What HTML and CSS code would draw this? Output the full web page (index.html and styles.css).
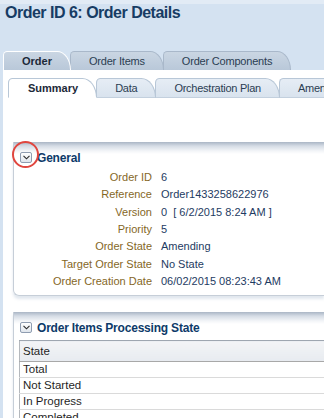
FILE: index.html
```html
<!DOCTYPE html>
<html lang="en">
<head>
    <meta charset="UTF-8">
    <meta name="viewport" content="width=device-width, initial-scale=1.0">
    <title>Order Details</title>
    <link rel="stylesheet" href="styles.css">
</head>
<body>
    <header class="page-title">
        <h1>Order ID 6: Order Details</h1>
    </header>

    <!-- Pestañas principales -->
    <nav class="tabs tabs-main">
        <a href="#" class="tab active">Order</a>
        <a href="#" class="tab">Order Items</a>
        <a href="#" class="tab">Order Components</a>
    </nav>

    <main class="content">
        <nav class="tabs tabs-sub">
            <a href="#" class="tab active">Summary</a>
            <a href="#" class="tab">Data</a>
            <a href="#" class="tab">Orchestration Plan</a>
            <a href="#" class="tab">Amendments</a>
        </nav>

        <!-- Panel General -->
        <section class="panel">
            <div class="panel-header">
                <button class="toggle" type="button">
                    <svg width="7" height="5" viewBox="0 0 7 5"><path d="M0.5 0.8 L3.5 3.8 L6.5 0.8" fill="none" stroke="#2a2a2a" stroke-width="1.1"/></svg>
                    <span class="ring"></span>
                </button>
                <h2>General</h2>
            </div>
            <dl class="fields">
                <dt>Order ID</dt><dd>6</dd>
                <dt>Reference</dt><dd>Order1433258622976</dd>
                <dt>Version</dt><dd>0 &nbsp;[ 6/2/2015 8:24 AM ]</dd>
                <dt>Priority</dt><dd>5</dd>
                <dt>Order State</dt><dd>Amending</dd>
                <dt>Target Order State</dt><dd>No State</dd>
                <dt>Order Creation Date</dt><dd>06/02/2015 08:23:43 AM</dd>
            </dl>
        </section>

        <!-- Panel estado de items -->
        <section class="panel">
            <div class="panel-header">
                <button class="toggle" type="button">
                    <svg width="7" height="5" viewBox="0 0 7 5"><path d="M0.5 0.8 L3.5 3.8 L6.5 0.8" fill="none" stroke="#2a2a2a" stroke-width="1.1"/></svg>
                </button>
                <h2>Order Items Processing State</h2>
            </div>
            <table class="state-table">
                <thead>
                    <tr><th>State</th></tr>
                </thead>
                <tbody>
                    <tr><td>Total</td></tr>
                    <tr><td>Not Started</td></tr>
                    <tr><td>In Progress</td></tr>
                    <tr><td>Completed</td></tr>
                </tbody>
            </table>
        </section>
    </main>
</body>
</html>
```

FILE: styles.css
```css
/* Estilos generales */
body {
    font-family: 'Liberation Sans', Arial, sans-serif;
    font-size: 11px;
    margin: 0;
    background-color: #d4e2f1;
    border-top: 4px solid #e2ebf5;
    overflow: hidden;
}

.page-title h1 {
    margin: 0;
    padding-left: 5px;
    font-size: 16px;
    line-height: 18px;
    letter-spacing: -0.5px;
    color: #173c64;
}

/* Pestañas */
.tabs {
    display: flex;
}

.tab {
    display: block;
    flex-shrink: 0;
    text-decoration: none;
    white-space: nowrap;
    color: #2b3d52;
    border: 1px solid #a9b8ca;
    border-bottom: none;
    border-radius: 5px 16px 0 0 / 5px 22px 0 0;
    box-sizing: border-box;
}

.tab.active {
    background: #fff;
    border-color: #fff;
    font-weight: bold;
    color: #1c2938;
    position: relative;
    z-index: 1;
}

.tabs-main {
    margin: 29px 0 0 3px;
    height: 19px;
}

.tabs-main .tab {
    height: 19px;
    line-height: 17px;
    padding: 1px 18px 0;
    background: linear-gradient(#cad6e3, #b9c8d9);
}

.tabs-main .tab + .tab {
    margin-left: -1px;
    letter-spacing: -0.2px;
}

.content {
    background: #fff;
    margin-left: 3px;
    padding-top: 8px;
    min-height: 400px;
}

.tabs-sub {
    margin-left: 5px;
    height: 20px;
    overflow: hidden;
}

.tabs-sub .tab {
    height: 20px;
    line-height: 18px;
    padding: 0 18px;
    letter-spacing: -0.25px;
    background: linear-gradient(#e6edf5, #d9e3ee);
    border-color: #b8c7d7;
    border-bottom: 1px solid #c3d0de;
}

.tabs-sub .tab.active {
    padding: 0 18px 0 19px;
    letter-spacing: 0;
    border-bottom-color: #fff;
    background: #fff;
}

.tabs-sub .tab + .tab {
    margin-left: -1px;
}

/* Paneles */
.panel {
    margin: 44px 0 0 10px;
    border-left: 1px solid #c6ced8;
    border-bottom: 1px solid #c6ced8;
    border-bottom-left-radius: 6px;
    background: linear-gradient(#aab6c5 0, #d5dce5 4px, #f3f5f8 9px, #fff 12px);
    box-shadow: 0 3px 3px rgba(90, 120, 160, 0.18);
    padding-bottom: 5px;
}

.panel + .panel {
    margin-top: 16px;
}

.panel-header {
    display: flex;
    align-items: center;
    gap: 5px;
    padding: 9px 0 0 6px;
    height: 13px;
}

.panel-header h2 {
    margin: 0;
    font-size: 12px;
    letter-spacing: -0.2px;
    color: #0d3a69;
}

.toggle {
    position: relative;
    width: 12px;
    height: 11px;
    padding: 0;
    border: 1px solid #8f9db1;
    border-radius: 2px;
    background: linear-gradient(#ffffff, #dfe5ec);
    display: flex;
    align-items: center;
    justify-content: center;
}

/* Círculo rojo de resaltado */
.ring {
    position: absolute;
    left: -9px;
    top: -12px;
    width: 27px;
    height: 27px;
    box-sizing: border-box;
    border: 2px solid #e0463f;
    border-radius: 50%;
}

/* Campos */
.fields {
    display: grid;
    grid-template-columns: 138px 1fr;
    grid-auto-rows: 17.35px;
    column-gap: 9px;
    margin: 5px 0 0;
    line-height: 17px;
}

.fields dt {
    text-align: right;
    color: #85671f;
}

.fields dd {
    margin: 0;
    color: #1e3b62;
    white-space: nowrap;
}

/* Tabla */
.state-table {
    width: calc(100% - 5px);
    margin: 6px 0 0 5px;
    border-collapse: collapse;
    border-left: 1px solid #b4b8bd;
    border-top: 1px solid #9ea6b0;
    font-size: 11.5px;
    color: #1f1f1f;
}

.state-table th {
    height: 20px;
    padding: 0 3px;
    text-align: left;
    font-weight: normal;
    background: linear-gradient(#f3f4f6, #e7ebf0);
    border-bottom: 1px solid #a8a8a8;
}

.state-table td {
    height: 15px;
    padding: 0 3px;
    border-bottom: 1px solid #dadada;
    line-height: 15px;
}
```
